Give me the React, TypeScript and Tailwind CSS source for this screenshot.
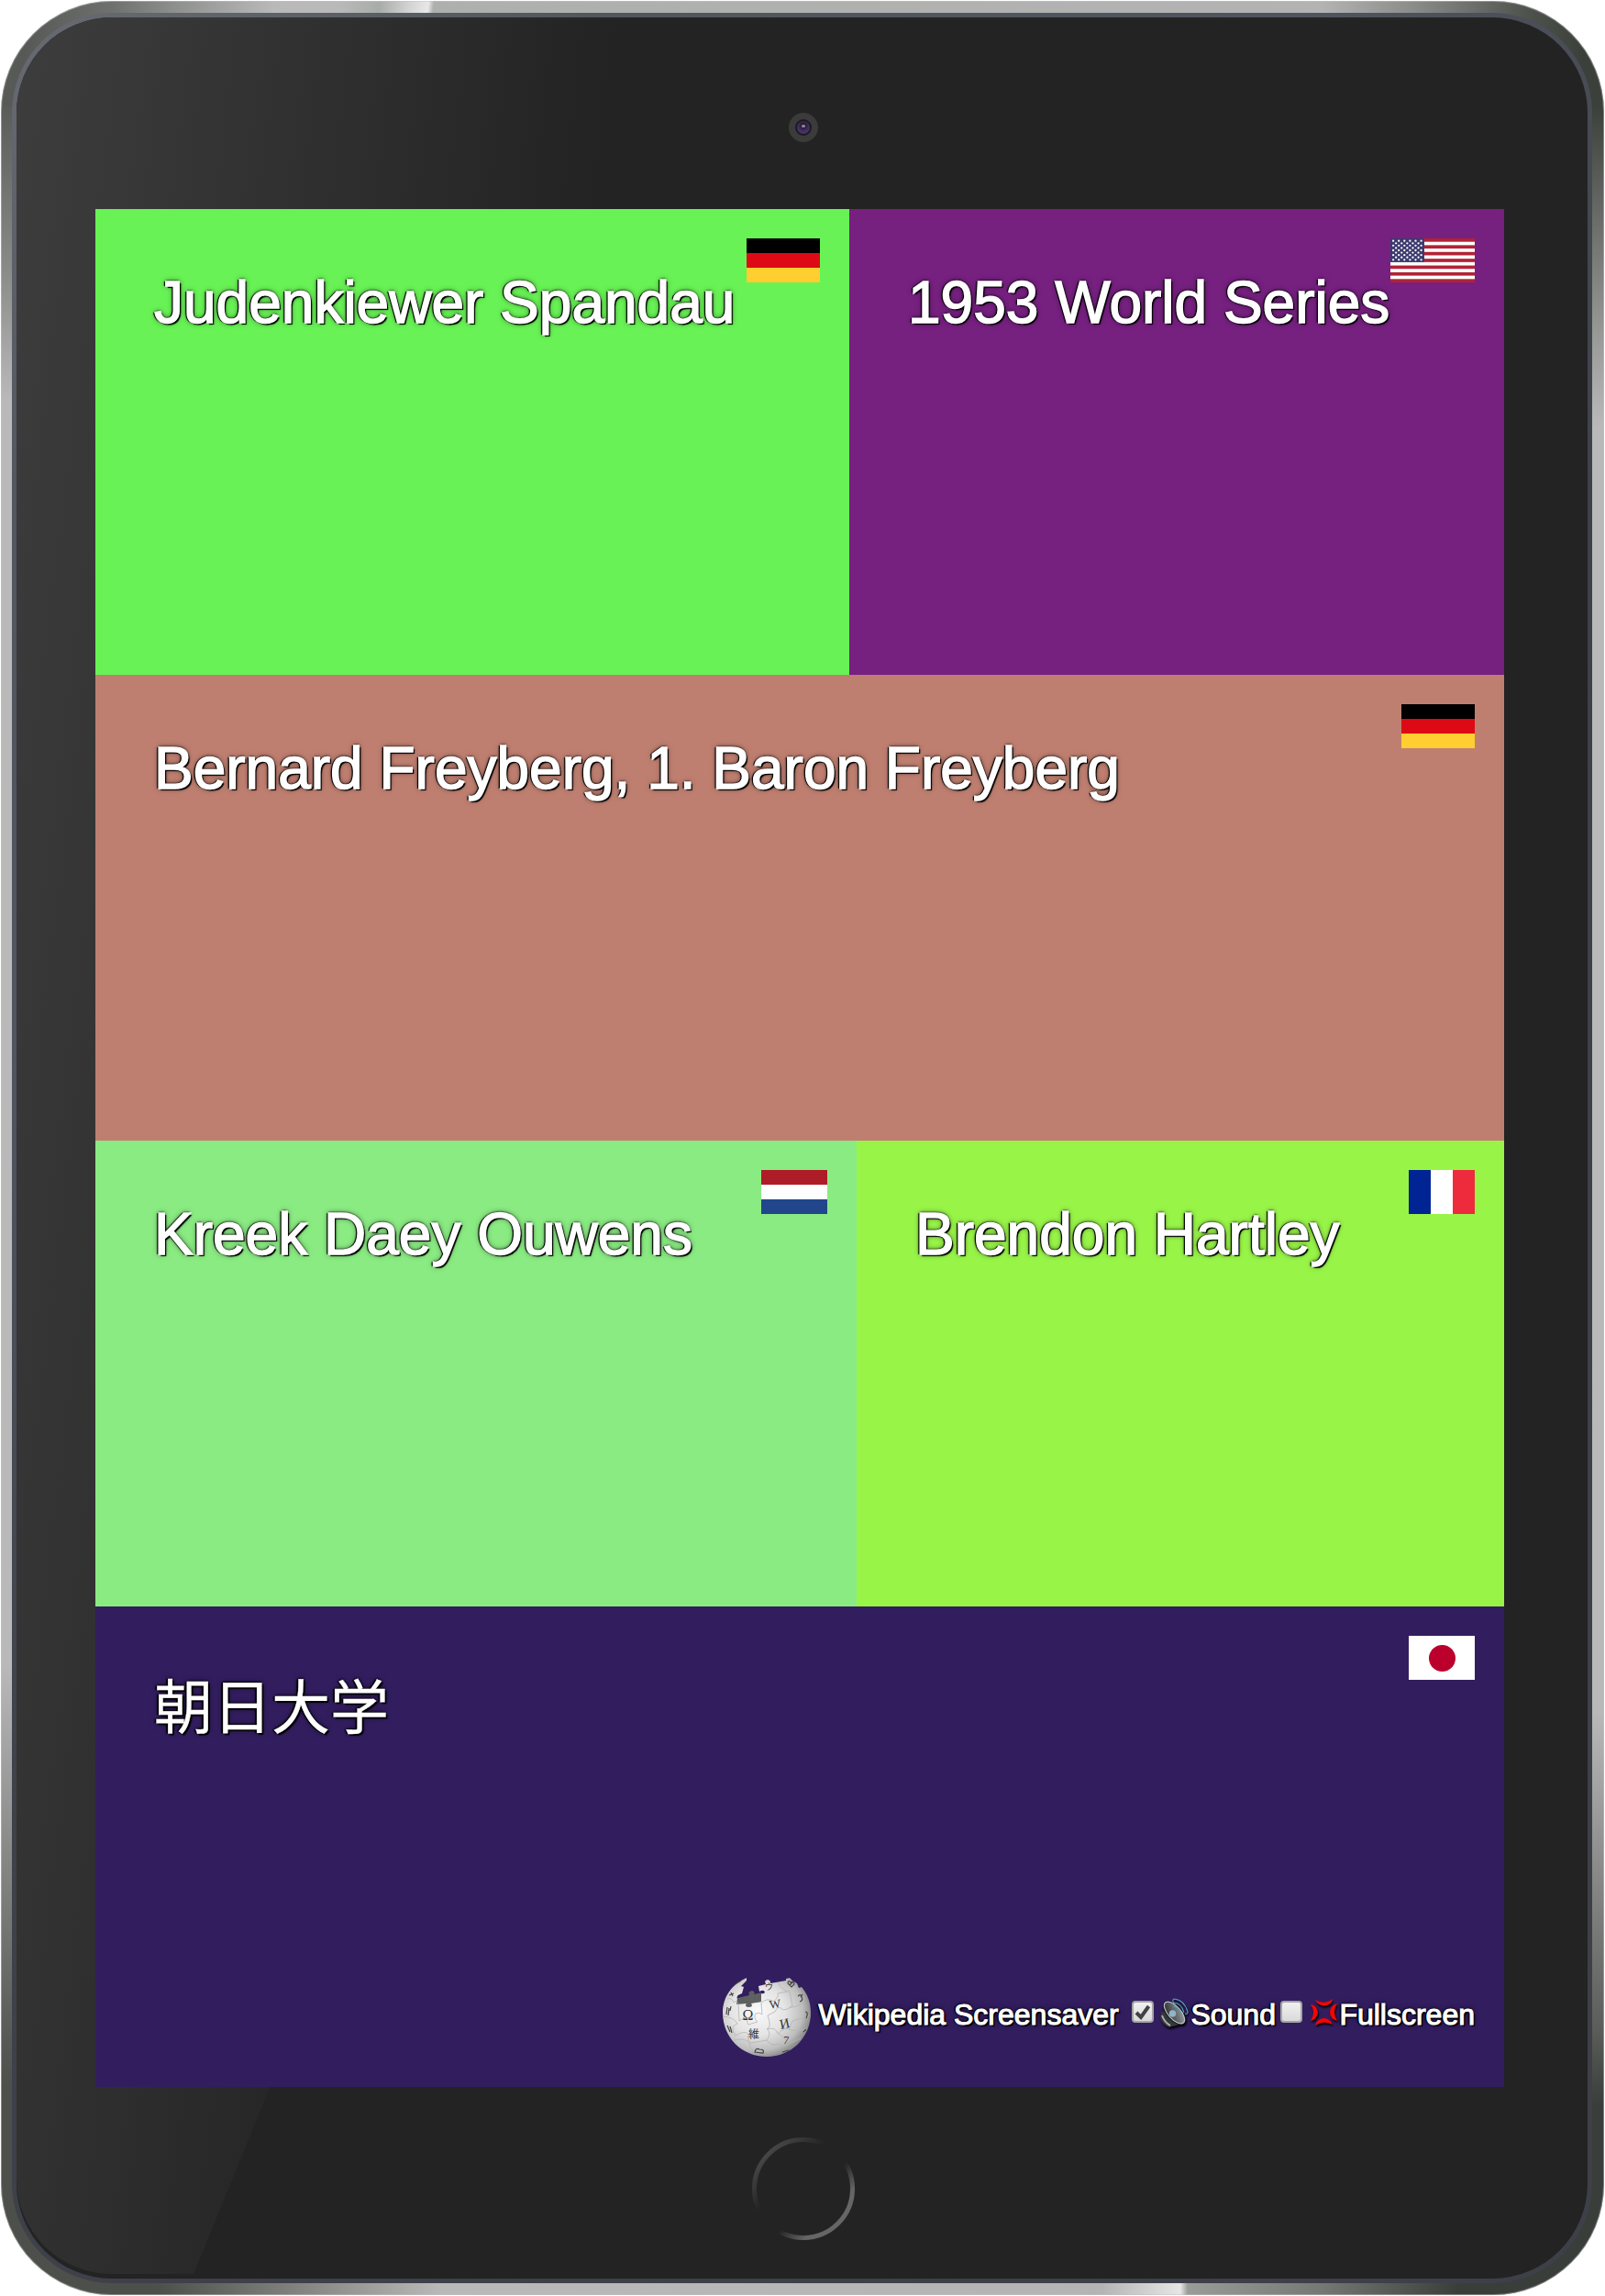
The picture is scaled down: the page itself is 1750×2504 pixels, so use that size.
import React from "react";

const shadow =
  "[text-shadow:2px_2px_1px_#000,-2px_0px_1px_#000,0px_-1px_2px_#000,0px_0px_6px_rgba(0,0,0,0.6)]";

function GermanFlag() {
  return (
    <div className="flex h-12 w-20 flex-col">
      <div className="flex-1 bg-black" />
      <div className="flex-1 bg-[#dd0a15]" />
      <div className="flex-1 bg-[#ffce30]" />
    </div>
  );
}

function DutchFlag() {
  return (
    <div className="flex h-12 w-[72px] flex-col">
      <div className="flex-1 bg-[#ae1c28]" />
      <div className="flex-1 bg-white" />
      <div className="flex-1 bg-[#21468b]" />
    </div>
  );
}

function FrenchFlag() {
  return (
    <div className="flex h-12 w-[72px]">
      <div className="flex-1 bg-[#002494]" />
      <div className="flex-1 bg-white" />
      <div className="flex-1 bg-[#ee2b3d]" />
    </div>
  );
}

function JapaneseFlag() {
  return (
    <div className="flex h-12 w-[72px] items-center justify-center bg-white">
      <div className="h-[29px] w-[29px] rounded-full bg-[#bc002d]" />
    </div>
  );
}

function AmericanFlag() {
  const stars: [number, number][] = [];
  for (let r = 0; r < 9; r++) {
    for (let c = 0; c < (r % 2 ? 5 : 6); c++) {
      stars.push([3.1 + c * 6.1 + (r % 2 ? 3.05 : 0), 2.7 + r * 2.58]);
    }
  }
  return (
    <svg width="92" height="48" viewBox="0 0 92 48" className="block">
      <rect width="92" height="48" fill="#fff" />
      {[0, 1, 2, 3, 4, 5, 6].map((i) => (
        <rect key={i} y={i * 7.385} width="92" height="3.69" fill="#b22234" />
      ))}
      <rect width="37" height="25.8" fill="#3c3b6e" />
      {stars.map(([x, y], i) => (
        <circle key={i} cx={x} cy={y} r="1.15" fill="#fff" />
      ))}
    </svg>
  );
}

function Globe() {
  return (
    <svg width="96" height="88" viewBox="0 0 96 88" className="block shrink-0 [-webkit-text-stroke:0] [text-shadow:none]">
      <defs>
        <radialGradient id="ball" cx="0.4" cy="0.42" r="0.62">
          <stop offset="0" stopColor="#fafafa" />
          <stop offset="0.5" stopColor="#e4e4e4" />
          <stop offset="0.82" stopColor="#bdbdbd" />
          <stop offset="1" stopColor="#858585" />
        </radialGradient>
      </defs>
      <path
        fill="url(#ball)"
        d="M26 1 C10 8 0 22 0 39 C0 66 21 87 48 87 C75 87 96 66 96 39 C96 27 92 18 86 11 L83 12 L81 7 L76 4 L73 1 L69 2 L69 4 L52 7 L52 5 Q49 1 46 5 L47 8 L39 10 L40 16 Q45 13 46 17 Q44 19 42 18 L42 27 L18 29 L16 24 Q14 20 21 18 L23 11 L20 10 L26 4 Z"
      />
      <path fill="#5f6060" d="M16 23 L29 20 Q27 16 32 15 Q36 16 34 19 L42 17 L42 27 L31 29 Q34 33 28 33 Q23 32 26 29 L15 30 Z" />
      <g fill="none" stroke="#b4b4b4" strokeWidth="0.8">
        <path d="M5 24 Q10 22 12 28 Q15 25 17 30 L18 48 Q23 44 27 48 Q26 54 31 51 L38 49 Q33 45 36 40 Q40 38 43 41 L42 28 Q50 22 55 27 Q62 22 60 18 L70 16" />
        <path d="M60 6 Q66 16 73 16 L76 32 Q70 36 66 36 Q60 30 57 38 L49 42 Q54 55 48 57 Q58 54 60 62 Q69 54 72 57 L76 48 Q84 46 95 42" />
        <path d="M1 43 Q12 44 16 51 Q7 54 14 64 Q23 58 28 62 Q26 70 31 72 L48 69 Q53 62 49 57" />
        <path d="M12 69 Q26 66 30 73 Q28 78 35 82 M48 69 Q53 76 61 73 Q67 78 72 73 L85 67 M72 57 Q82 61 92 56 M73 33 Q85 33 89 25 M61 62 Q68 66 72 73" />
      </g>
      <g fill="#333" className="font-['Liberation_Serif','Noto_Sans_CJK_JP',serif]">
        <text x="21.5" y="46.5" fontSize="16">Ω</text>
        <text x="51" y="34" fontSize="13" transform="rotate(-8 57 30)">W</text>
        <text x="62" y="56" fontSize="15" transform="rotate(-12 67 51)">И</text>
        <text x="28" y="67" fontSize="12">維</text>
        <text x="66" y="73" fontSize="12" transform="rotate(6 68 70)">7</text>
        <text x="46" y="14" fontSize="9">ウ</text>
      </g>
      <g fill="none" stroke="#444" strokeWidth="1.2">
        <path d="M71 7 Q71 3 74 6 Q78 4 78 8 L75 11 Z M73 9 L77 5" />
        <path d="M82 21 Q86 18 86 22 Q88 26 84 27 M87 19 L85 22" />
        <path d="M5 33 L4 41 M7 34 L6 42 M9 32 L8 37 M5 53 L8 60 M8 54 L10 61 M7 20 L12 18 M9 17 L11 21 M15 7 L20 4" />
        <path d="M35 82 Q36 77 40 79 Q46 79 44 83 Z M65 82 L72 80 M88 60 L91 57 M90 38 Q94 38 91 45" />
      </g>
    </svg>
  );
}

function Speaker() {
  return (
    <svg width="32" height="34" viewBox="0 0 32 34" className="block shrink-0 drop-shadow-[1px_2px_1px_#000]">
      <defs>
        <linearGradient id="cone" x1="0" y1="0" x2="1" y2="1">
          <stop offset="0" stopColor="#222" />
          <stop offset="1" stopColor="#a0a8ac" />
        </linearGradient>
      </defs>
      <path d="M2 16 L1 23 Q4 31 11 33 L22 30 L13 17 Z" fill="#35383a" />
      <path d="M3 20 Q6 28 12 31" stroke="#a9adb0" strokeWidth="2" fill="none" />
      <ellipse cx="16.5" cy="17" rx="8.5" ry="16" transform="rotate(-42 16.5 17)" fill="#16191b" />
      <ellipse cx="16.5" cy="17" rx="6.8" ry="14.8" transform="rotate(-42 16.5 17)" fill="url(#cone)" stroke="#b9c1c5" strokeWidth="1.2" />
      <circle cx="14.5" cy="18" r="3.7" fill="#8fb5cb" />
      <g fill="none" stroke="#5c9fbb" strokeWidth="1.1">
        <path d="M16 2 Q27 3 31 16 Q31 19 28 18" />
        <path d="M15 6 Q24 6 27 17" />
        <path d="M15 10 Q21 10 24 18" />
        <path d="M16 2 Q13 4 17 8" />
      </g>
    </svg>
  );
}

function Anger() {
  return (
    <svg width="32" height="32" viewBox="0 0 32 32" className="block shrink-0 drop-shadow-[1px_2px_1px_#000]">
      <g fill="#f50500">
        <path d="M6 2 Q16 8 25 1 Q24 8 16 8.5 Q9 8 6 2 Z" />
        <path d="M6 30 Q15 24 25 29 Q22 22 15 22 Q8 23 6 30 Z" />
        <path d="M1 7 Q7 15 1 25 Q8 23 9 16 Q8 8 1 7 Z" />
        <path d="M30 6 Q24 14 30 25 Q22 23 22 15 Q23 8 30 6 Z" />
      </g>
    </svg>
  );
}

function Box({ checked }: { checked?: boolean }) {
  return (
    <span className="flex h-6 w-6 shrink-0 items-center justify-center rounded-[4px] border-2 border-[#a4a4a4] bg-linear-to-b from-[#f0f0f0] to-[#dadada]">
      {checked && (
        <svg width="20" height="20" viewBox="0 0 20 20">
          <path d="M3 11 L8 16 L16.5 4" fill="none" stroke="#424242" strokeWidth="4" />
        </svg>
      )}
    </span>
  );
}

function Tile({ className, title, flag, children }: { className: string; title: React.ReactNode; flag: React.ReactNode; children?: React.ReactNode }) {
  return (
    <section className={"relative pl-16 " + className}>
      <h2 className={"whitespace-nowrap text-[64px] leading-[74px] text-white " + shadow}>{title}</h2>
      <div className="absolute right-8 top-8">{flag}</div>
      {children}
    </section>
  );
}

export default function App() {
  return (
    <div className="h-[2504px] w-[1750px] bg-white pl-px pt-px font-['Liberation_Sans','Noto_Sans_CJK_JP',sans-serif]">
      <div className="h-[2502px] w-[1748px] rounded-[121px] bg-[linear-gradient(97deg,#595c58_0px,#565955_32px,#6e716d_122px,#8f918f_192px,#b9b9b9_297px,#b9b9b9_367px,#a8aca8_410px,#d2d3d2_442px,#e8e8e8_463px,#adb0ac_469px,#b3b3b3_1430px,#8a8c89_1530px,#50544f_1650px,#3c403b_1720px),linear-gradient(to_right,#4c4f4a_0px,#4c4f4a_170px,#9a9a98_390px,#b9b9b9_480px,#b4b4b4_1200px,#d0d1d0_1250px,#e6e6e6_1286px,#9a9c99_1294px,#757875_1440px,#3a3e3a_1590px),linear-gradient(to_bottom,#595c58_0px,#8a8c89_180px,#b9b9b9_320px,#b9b9b9_1700px,#565955_2110px,#4c4f4a_2160px),linear-gradient(to_bottom,#3c403b_0px,#989a97_250px,#b9b9b9_350px,#b9b9b9_1750px,#595c58_2100px,#3a3e3a_2180px)] bg-[size:100%_115px,100%_115px,50%_2272px,50%_2272px] bg-[position:0_0,0_100%,0_115px,100%_115px] bg-no-repeat pb-[13px] pl-[12px] pr-[13px] pt-[13px] shadow-[inset_0_0_0_1px_rgba(190,195,190,0.5)]">
        <div className="h-full rounded-[109px] bg-[linear-gradient(140deg,#686b73_0px,#52565f_400px,#50545f_900px,#3e4149_1500px,#3d4048_100%)] p-[5px]">
          <div className="relative h-full overflow-hidden rounded-[104px] bg-[#232323] pl-[86px] pt-[209px]">
            <div className="absolute inset-x-0 top-0 bottom-[5px] rounded-bl-[104px] bg-[linear-gradient(97deg,#3d3d3d_0px,#232323_650px)] [clip-path:polygon(0_0,1199px_0,193px_100%,0_100%)]" />
            <div className="absolute left-[842px] top-[104px] flex h-8 w-8 items-center justify-center rounded-full bg-[#3b3b3b]">
              <div className="flex h-[18px] w-[18px] items-center justify-center rounded-full border-2 border-[#1c1a20] bg-[radial-gradient(circle_at_50%_35%,#2a2035_25%,#442c64_50%,#4e3b68_100%)]">
                <div className="-mt-1 h-[3px] w-1 rounded-full bg-[#8d8795]" />
              </div>
            </div>
            <main className="relative flex h-[2048px] w-[1536px] flex-col [-webkit-text-stroke:1.5px_#fff]">
              <div className="flex h-[508px]">
                <Tile className="w-[822px] bg-[#68f255] pt-[65px]" title="Judenkiewer Spandau" flag={<GermanFlag />} />
                <Tile className="flex-1 bg-[#762080] pt-[65px]" title="1953 World Series" flag={<AmericanFlag />} />
              </div>
              <Tile className="h-[508px] bg-[#bf7f70] pt-[65px]" title="Bernard Freyberg, 1. Baron Freyberg" flag={<GermanFlag />} />
              <div className="flex h-[508px]">
                <Tile className="w-[830px] bg-[#8aeb82] pt-[65px]" title="Kreek Daey Ouwens" flag={<DutchFlag />} />
                <Tile className="flex-1 bg-[#98f548] pt-[65px]" title="Brendon Hartley" flag={<FrenchFlag />} />
              </div>
              <Tile className="h-[524px] bg-[#321d5f] pt-[74px] [-webkit-text-stroke:0.3px_#fff]" title="朝日大学" flag={<JapaneseFlag />}>
                <footer className={"absolute bottom-8 right-8 flex h-[88px] items-center whitespace-nowrap text-[32px] leading-9 text-white [-webkit-text-stroke:1.1px_#fff] " + shadow}>
                  <Globe />
                  <div className="flex items-center pb-[7px]">
                    <span className="ml-2 w-[333px]">Wikipedia Screensaver</span>
                    <span className="mb-[5px] ml-[9px] mr-[6px]"><Box checked /></span>
                    <span className="mb-[3px]"><Speaker /></span>
                    <span className="ml-0.5 w-[93px]">Sound</span>
                    <span className="mb-[5px] ml-[5px] mr-2"><Box /></span>
                    <span className="mb-[3px]"><Anger /></span>
                    <span>Fullscreen</span>
                  </div>
                </footer>
              </Tile>
            </main>
            <svg width="114" height="114" viewBox="0 0 114 114" className="absolute left-[801px] top-[2311px]">
              <defs>
                <linearGradient id="ring" x1="0.1" y1="0.12" x2="0.88" y2="0.88">
                  <stop offset="0" stopColor="#4a4a4a" />
                  <stop offset="0.35" stopColor="#232323" />
                  <stop offset="0.62" stopColor="#232323" />
                  <stop offset="0.85" stopColor="#666" />
                  <stop offset="1" stopColor="#666" />
                </linearGradient>
              </defs>
              <circle cx="57" cy="57" r="53.5" fill="none" stroke="url(#ring)" strokeWidth="5" />
            </svg>
          </div>
        </div>
      </div>
    </div>
  );
}
